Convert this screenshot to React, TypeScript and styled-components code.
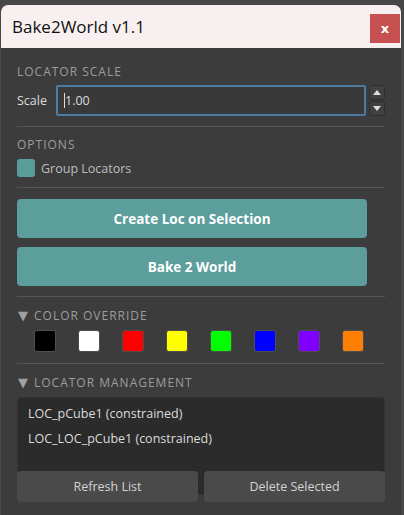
import React from "react";
import styled, { createGlobalStyle } from "styled-components";

const Global = createGlobalStyle`
  html, body { margin: 0; padding: 0; background: #474747; }
  body { font-family: "Open Sans", "Noto Sans", sans-serif; }
  * { box-sizing: border-box; }
`;

const Desktop = styled.div`
  width: 404px;
  height: 515px;
  padding: 5px 3px 0 1px;
  background: #474747;
  overflow: hidden;
`;

const Window = styled.div`
  width: 400px;
  height: 510px;
  border-radius: 7px 7px 0 0;
  overflow: hidden;
  background: #3c3c3c;
  display: flex;
  flex-direction: column;
`;

const TitleBar = styled.div`
  height: 43px;
  flex: none;
  background: #f8f0f0;
  display: flex;
  align-items: flex-start;
  justify-content: space-between;
  padding-left: 11px;
`;

const Title = styled.div`
  margin-top: 10px;
  font-size: 17px;
  color: #111;
  font-family: "Open Sans", "Noto Sans", sans-serif;
`;

const CloseBtn = styled.div`
  margin-top: 9px;
  margin-right: 1px;
  width: 30px;
  height: 29px;
  background: #c75050;
  color: #fff;
  font-weight: 700;
  font-size: 13px;
  display: flex;
  align-items: center;
  justify-content: center;
  font-family: "DejaVu Sans", sans-serif;
`;

const Body = styled.div`
  padding: 16px 16px 0 16px;
  display: flex;
  flex-direction: column;
`;

const Header = styled.div`
  font-size: 12px;
  letter-spacing: 1px;
  color: #9c9c9c;
  height: 16px;
  line-height: 16px;
  display: flex;
  align-items: center;
  gap: 6px;
`;

const Arrow = styled.span`
  font-size: 13px;
  letter-spacing: 0;
  color: #a0a0a0;
  margin-left: 1px;
  font-family: "DejaVu Sans", sans-serif;
`;

const Row = styled.div`
  display: flex;
  align-items: center;
  margin-top: 5px;
`;

const Label = styled.div`
  font-size: 12.5px;
  color: #dcdcdc;
  width: 39px;
`;

const Input = styled.div`
  flex: 1;
  height: 31px;
  border: 2px solid #4c7ca3;
  background: #393939;
  border-radius: 2px;
  display: flex;
  align-items: center;
  padding-left: 6px;
  font-size: 12.5px;
  color: #dcdcdc;
`;

const Caret = styled.span`
  display: inline-block;
  width: 1px;
  height: 15px;
  background: #ddd;
`;

const Spin = styled.div`
  width: 16px;
  margin-left: 3px;
  display: flex;
  flex-direction: column;
  gap: 1px;
`;

const SpinBtn = styled.div`
  height: 15px;
  background: #404040;
  border: 1px solid #2f2f2f;
  border-radius: 3px;
  display: flex;
  align-items: center;
  justify-content: center;
`;

const Sep = styled.div<{ $top: number; $bottom: number }>`
  height: 1px;
  background: #555;
  margin-top: ${(p) => p.$top}px;
  margin-bottom: ${(p) => p.$bottom}px;
`;

const CheckRow = styled.div`
  display: flex;
  align-items: center;
  gap: 6px;
  margin-top: 6px;
  font-size: 12.5px;
  color: #bdbdbd;
`;

const Check = styled.div`
  width: 18px;
  height: 18px;
  border-radius: 3px;
  background: #5a9e9c;
`;

const Action = styled.div<{ $top: number }>`
  width: 350px;
  height: 39px;
  margin-top: ${(p) => p.$top}px;
  border-radius: 4px;
  background: #5b9e9c;
  color: #fff;
  font-weight: 700;
  font-size: 13.5px;
  display: flex;
  align-items: center;
  justify-content: center;
`;

const Swatches = styled.div`
  display: flex;
  gap: 22px;
  padding-left: 17px;
  margin-top: 6px;
`;

const Swatch = styled.div<{ $c: string }>`
  width: 22px;
  height: 22px;
  border-radius: 3px;
  background: ${(p) => p.$c};
  border: 1px solid #4e4e4e;
`;

const ListBox = styled.div`
  margin-top: 6px;
  height: 98px;
  background: #2b2b2b;
  border: 1px solid #333;
  border-radius: 4px;
  padding: 6px 0 0 10px;
`;

const Item = styled.div`
  font-size: 12.5px;
  color: #dcdcdc;
  height: 25px;
  line-height: 20px;
`;

const BtnRow = styled.div`
  display: grid;
  grid-template-columns: 181px 181px;
  gap: 6px;
  margin-top: -24px;
`;

const SmallBtn = styled.div`
  height: 31px;
  background: #4a4a4a;
  border-radius: 4px;
  color: #d4d4d4;
  font-size: 12.5px;
  display: flex;
  align-items: center;
  justify-content: center;
`;

const colors = ["#000000", "#ffffff", "#ff0000", "#ffff00", "#00ff00", "#0000ff", "#8000ff", "#ff8000"];

export default function App() {
  return (
    <>
      <Global />
      <Desktop>
        <Window>
          <TitleBar>
            <Title>Bake2World v1.1</Title>
            <CloseBtn>x</CloseBtn>
          </TitleBar>
          <Body>
            <Header>LOCATOR SCALE</Header>
            <Row>
              <Label>Scale</Label>
              <Input>
                <Caret />
                1.00
              </Input>
              <Spin>
                <SpinBtn>
                  <svg width="8" height="5" viewBox="0 0 8 5"><polygon points="4,0 8,5 0,5" fill="#ddd" /></svg>
                </SpinBtn>
                <SpinBtn>
                  <svg width="8" height="5" viewBox="0 0 8 5"><polygon points="0,0 8,0 4,5" fill="#ddd" /></svg>
                </SpinBtn>
              </Spin>
            </Row>
            <Sep $top={10} $bottom={10} />
            <Header>OPTIONS</Header>
            <CheckRow>
              <Check />
              Group Locators
            </CheckRow>
            <Sep $top={10} $bottom={0} />
            <Action $top={11}>Create Loc on Selection</Action>
            <Action $top={9}>Bake 2 World</Action>
            <Sep $top={10} $bottom={11} />
            <Header>
              <Arrow>▼</Arrow>COLOR OVERRIDE
            </Header>
            <Swatches>
              {colors.map((c) => (
                <Swatch key={c} $c={c} />
              ))}
            </Swatches>
            <Sep $top={11} $bottom={11} />
            <Header>
              <Arrow>▼</Arrow>LOCATOR MANAGEMENT
            </Header>
            <ListBox>
              <Item>LOC_pCube1 (constrained)</Item>
              <Item>LOC_LOC_pCube1 (constrained)</Item>
            </ListBox>
            <BtnRow>
              <SmallBtn>Refresh List</SmallBtn>
              <SmallBtn>Delete Selected</SmallBtn>
            </BtnRow>
          </Body>
        </Window>
      </Desktop>
    </>
  );
}
